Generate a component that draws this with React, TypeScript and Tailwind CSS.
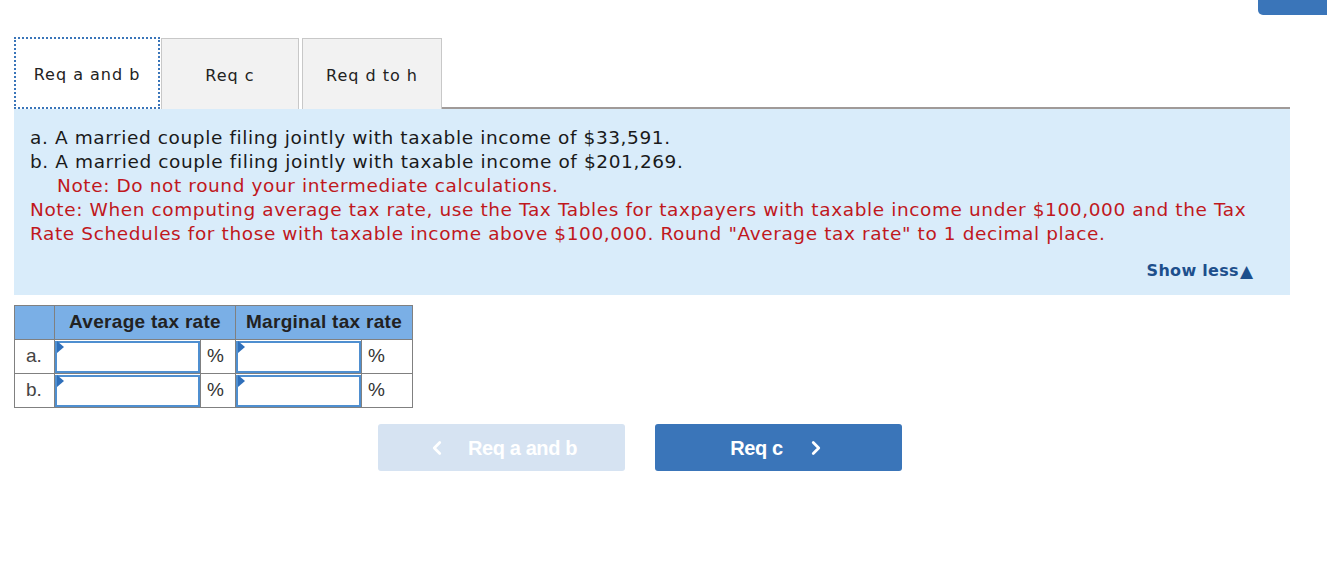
import { ChevronLeft, ChevronRight } from 'lucide-react';

const tabs = ['Req a and b', 'Req c', 'Req d to h'];

function RateInput() {
    return (
        <div className="relative h-[32px] w-full border-2 border-[#4f8fd0] bg-white">
            <span className="absolute left-0 top-0 h-0 w-0 border-l-[7px] border-t-[6px] border-b-[6px] border-l-[#2f6fba] border-t-transparent border-b-transparent -translate-y-[2px]" />
        </div>
    );
}

export default function App() {
    return (
        <div className="relative h-[583px] w-[1327px] bg-white" style={{ fontFamily: '"DejaVu Sans", Verdana, sans-serif' }}>
            {/* corner button */}
            <div className="absolute right-0 top-0 h-[15px] w-[69px] rounded-bl-[5px] bg-[#3a75b9]" />

            <div className="pl-[14px] pr-[37px] pt-[37px]">
                {/* Tabs */}
                <div className="flex items-end">
                    <div className="flex h-[72px] w-[146px] items-center justify-center border-2 border-dotted border-[#3a75b9] bg-white pt-[3px] text-[16px] tracking-[1px] text-[#222]">
                        {tabs[0]}
                    </div>
                    <div className="ml-[1px] flex h-[71px] w-[138px] items-center justify-center border border-b-0 border-[#c8c8c8] bg-[#f2f2f2] pt-[3px] text-[16px] tracking-[1px] text-[#222]">
                        {tabs[1]}
                    </div>
                    <div className="ml-[3px] flex h-[71px] w-[140px] items-center justify-center border border-b-0 border-[#c8c8c8] bg-[#f2f2f2] pt-[3px] text-[16px] tracking-[1px] text-[#222]">
                        {tabs[2]}
                    </div>
                    <div className="flex-1 border-b-2 border-[#a09a98]" />
                </div>

                {/* Question panel */}
                <div className="bg-[#d9ecfa] pb-[12px] pl-[16px] pr-[30px] pt-[17px] text-[18.5px] leading-[24px] tracking-[0.6px]">
                    <p className="text-[#1a1a1a]">a. A married couple filing jointly with taxable income of $33,591.</p>
                    <p className="text-[#1a1a1a]">b. A married couple filing jointly with taxable income of $201,269.</p>
                    <p className="pl-[27px] text-[#c0181d]">Note: Do not round your intermediate calculations.</p>
                    <p className="text-[#c0181d]">
                        Note: When computing average tax rate, use the Tax Tables for taxpayers with taxable income under $100,000 and the Tax Rate Schedules for those with taxable income above $100,000. Round "Average tax rate" to 1 decimal place.
                    </p>
                    <div className="mt-[13px] flex justify-end pr-[7px]">
                        <span className="flex items-center text-[16px] font-bold tracking-[0.3px] text-[#1d4f8c]">
                            Show less<span className="ml-[1px] text-[17px] tracking-normal">▲</span>
                        </span>
                    </div>
                </div>

                {/* Answer table */}
                <table
                    className="mt-[10px] border-collapse border border-[#808080] text-[#222]"
                    style={{ fontFamily: '"Liberation Sans", Arial, sans-serif' }}
                >
                    <thead>
                        <tr className="h-[34px] bg-[#7aafe6] text-[19px] tracking-[0.3px]">
                            <th className="w-[40px] border border-[#808080]" />
                            <th colSpan={2} className="border border-[#808080] px-[12px] font-bold">Average tax rate</th>
                            <th colSpan={2} className="border border-[#808080] px-[9px] font-bold">Marginal tax rate</th>
                        </tr>
                    </thead>
                    <tbody>
                        {['a.', 'b.'].map((label) => (
                            <tr key={label} className="h-[34px] text-[19px]">
                                <td className="border border-[#808080] pl-[11px] text-[#444]">{label}</td>
                                <td className="w-[146px] border border-[#808080] p-0"><RateInput /></td>
                                <td className="w-[35px] border border-[#808080] pl-[6px] text-[#333]">%</td>
                                <td className="w-[126px] border border-[#808080] p-0"><RateInput /></td>
                                <td className="w-[51px] border border-[#808080] pl-[6px] text-[#333]">%</td>
                            </tr>
                        ))}
                    </tbody>
                </table>

                {/* Navigation */}
                <div className="mt-[16px] flex gap-[30px] pl-[364px]" style={{ fontFamily: '"Liberation Sans", Arial, sans-serif' }}>
                    <button className="flex h-[47px] w-[247px] items-center justify-center gap-[20px] rounded-[3px] bg-[#d6e3f2] text-[20px] font-bold tracking-[-0.4px] text-white">
                        <ChevronLeft className="h-[22px] w-[22px]" strokeWidth={3} />
                        Req a and b
                    </button>
                    <button className="flex h-[47px] w-[247px] items-center justify-center gap-[22px] rounded-[3px] bg-[#3a75b9] text-[20px] font-bold tracking-[-0.4px] text-white">
                        Req c
                        <ChevronRight className="h-[22px] w-[22px]" strokeWidth={3} />
                    </button>
                </div>
            </div>
        </div>
    );
}
